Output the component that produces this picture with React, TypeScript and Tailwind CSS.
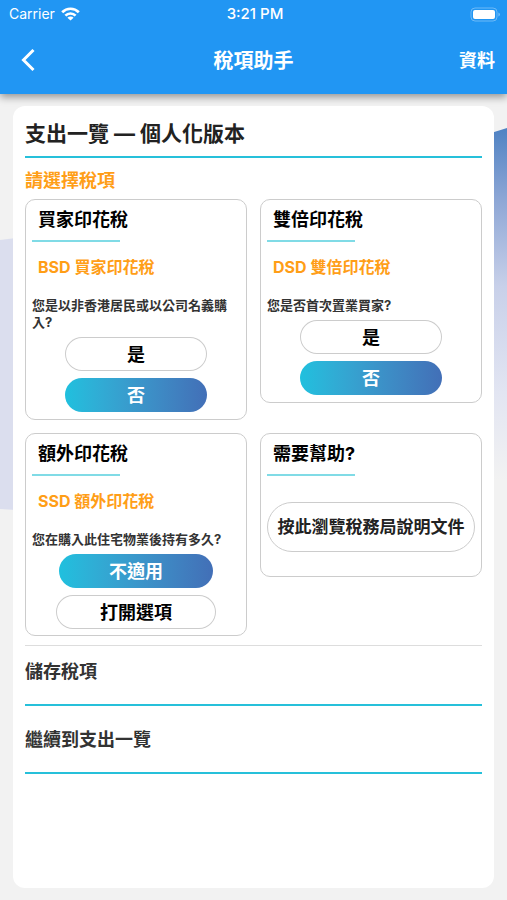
import { useState } from "react";
import type { ReactNode } from "react";

function StatusBar() {
  return (
    <div className="grid h-7 grid-cols-3 items-center pl-[9px] pr-1.5 text-sm font-normal text-white">
      <div className="flex items-center gap-1.5">
        <span>Carrier</span>
        <svg className="h-[14px] w-[19px]" viewBox="0 0 19 14" fill="none" stroke="white" strokeWidth="2.7">
          <path d="M1.2 5.2a11.7 11.7 0 0 1 16.6 0" />
          <path d="M4.4 8.6a7.2 7.2 0 0 1 10.2 0" />
          <path d="M9.5 13.6 6.4 10.7a4.4 4.4 0 0 1 6.2 0Z" fill="white" stroke="none" />
        </svg>
      </div>
      <span className="text-center text-[15px] font-medium">3:21 PM</span>
      <svg className="h-[15px] w-[31px] justify-self-end" viewBox="0 0 31 15">
        <rect x="1" y="1" width="26" height="13" rx="4" fill="none" stroke="#6db9f7" strokeWidth="1" />
        <rect x="3" y="3" width="22" height="9" rx="2" fill="white" />
        <path d="M28.5 5.5a2.2 2.2 0 0 1 0 4Z" fill="#8ac7fa" />
      </svg>
    </div>
  );
}

function TaxCard({ title, children, className = "pb-[7px]" }: { title: string; children: ReactNode; className?: string }) {
  return (
    <section className={`rounded-[10px] border border-[#ccc] bg-white px-1.5 pt-1.5 ${className}`}>
      <h3 className="px-1.5 text-lg leading-7 text-black">{title}</h3>
      <div className="mt-1.5 h-0.5 w-[88px] bg-[#80dbe6]" />
      {children}
    </section>
  );
}

function Question({
  label,
  text,
  options,
  initial,
}: {
  label: string;
  text: string;
  options: { name: string; padding: string }[];
  initial: string;
}) {
  const [selected, setSelected] = useState(initial);

  return (
    <>
      <p className="mt-[13px] px-1.5 text-base leading-6 text-[#ff9e17]">{label}</p>
      <p className="mt-[18px] text-[13px] leading-[17px] text-[#333]">{text}</p>
      <div className="mt-1.5 flex flex-col items-center gap-[7px]">
        {options.map((option) => (
          <button
            key={option.name}
            type="button"
            aria-pressed={selected === option.name}
            onClick={() => setSelected(option.name)}
            className={`h-[34px] rounded-full pt-0.5 text-lg leading-7 ${option.padding} ${
              selected === option.name
                ? "bg-linear-to-r from-[#1fc0de] to-[#426fb7] text-white"
                : "bg-white text-black inset-ring inset-ring-[#ccc]"
            }`}
          >
            {option.name}
          </button>
        ))}
      </div>
    </>
  );
}

const yesNo = [
  { name: "是", padding: "px-[62px]" },
  { name: "否", padding: "px-[62px]" },
];

const holding = [
  { name: "不適用", padding: "px-[50px]" },
  { name: "打開選項", padding: "px-11" },
];

export default function App() {
  return (
    <div className="relative flex min-h-screen flex-col bg-[#f2f2f2] font-['Inter','Noto_Sans_CJK_TC',sans-serif] font-bold">
      {/* Background artwork at both edges */}
      <svg className="absolute left-0 top-[238px] h-[272px] w-4" viewBox="0 0 16 272">
        <path d="M0 2 16 0v272L0 271Z" fill="#dbdeee" />
      </svg>
      <svg className="absolute right-0 top-[126px] h-[354px] w-4" viewBox="0 0 16 354">
        <defs>
          <linearGradient id="edge" x1="0" y1="0" x2="0" y2="1">
            <stop offset="0" stopColor="#4f82c3" />
            <stop offset="0.2" stopColor="#8ca6d5" />
            <stop offset="0.45" stopColor="#c8d0e9" />
            <stop offset="0.75" stopColor="#e2e5f2" />
            <stop offset="1" stopColor="#f2f2f2" />
          </linearGradient>
        </defs>
        <path d="M0 7 16 2v352H0Z" fill="url(#edge)" />
      </svg>

      <header className="relative bg-[#2196f3] text-white shadow-[0_3px_8px_rgba(0,0,0,0.4)]">
        <StatusBar />
        <nav className="grid h-[66px] grid-cols-3 items-center px-3">
          <button type="button" aria-label="返回" className="flex h-10 w-8 items-center justify-center">
            <svg className="h-6 w-4" viewBox="0 0 16 24" fill="none" stroke="white" strokeWidth="3">
              <path d="M13.5 1 3.5 11l10 10" />
            </svg>
          </button>
          <h1 className="text-center text-xl leading-7">稅項助手</h1>
          <button type="button" className="justify-self-end text-lg leading-7">
            資料
          </button>
        </nav>
      </header>

      <main className="relative mx-[13px] mb-3 mt-3 flex-1 rounded-xl bg-white px-3 pt-[13px]">
        <h2 className="border-b-2 border-[#26c0da] pb-[7px] text-[21px] leading-[30px] text-[#222]">支出一覽 — 個人化版本</h2>
        <p className="mt-[9px] text-lg leading-7 text-[#ff9e17]">請選擇稅項</p>

        <div className="mt-1 grid grid-cols-2 items-start gap-[13px]">
          <TaxCard title="買家印花稅">
            <Question label="BSD 買家印花稅" text="您是以非香港居民或以公司名義購入?" options={yesNo} initial="否" />
          </TaxCard>
          <TaxCard title="雙倍印花稅">
            <Question label="DSD 雙倍印花稅" text="您是否首次置業買家?" options={yesNo} initial="否" />
          </TaxCard>
          <TaxCard title="額外印花稅" className="pb-1.5">
            <Question label="SSD 額外印花稅" text="您在購入此住宅物業後持有多久?" options={holding} initial="不適用" />
          </TaxCard>
          <TaxCard title="需要幫助?" className="pb-6">
            <button
              type="button"
              className="mt-[26px] h-[50px] w-full whitespace-nowrap rounded-full border border-[#ccc] text-[17px] leading-7 text-[#222]"
            >
              按此瀏覽稅務局說明文件
            </button>
          </TaxCard>
        </div>

        <div className="mt-[9px] border-t border-[#ddd]">
          <button type="button" className="block h-[60px] w-full border-b-2 border-[#26c0da] pb-1.5 text-left text-lg leading-7 text-[#333]">
            儲存稅項
          </button>
          <button type="button" className="block h-[68px] w-full border-b-2 border-[#26c0da] pt-0.5 text-left text-lg leading-7 text-[#333]">
            繼續到支出一覽
          </button>
        </div>
      </main>
    </div>
  );
}
